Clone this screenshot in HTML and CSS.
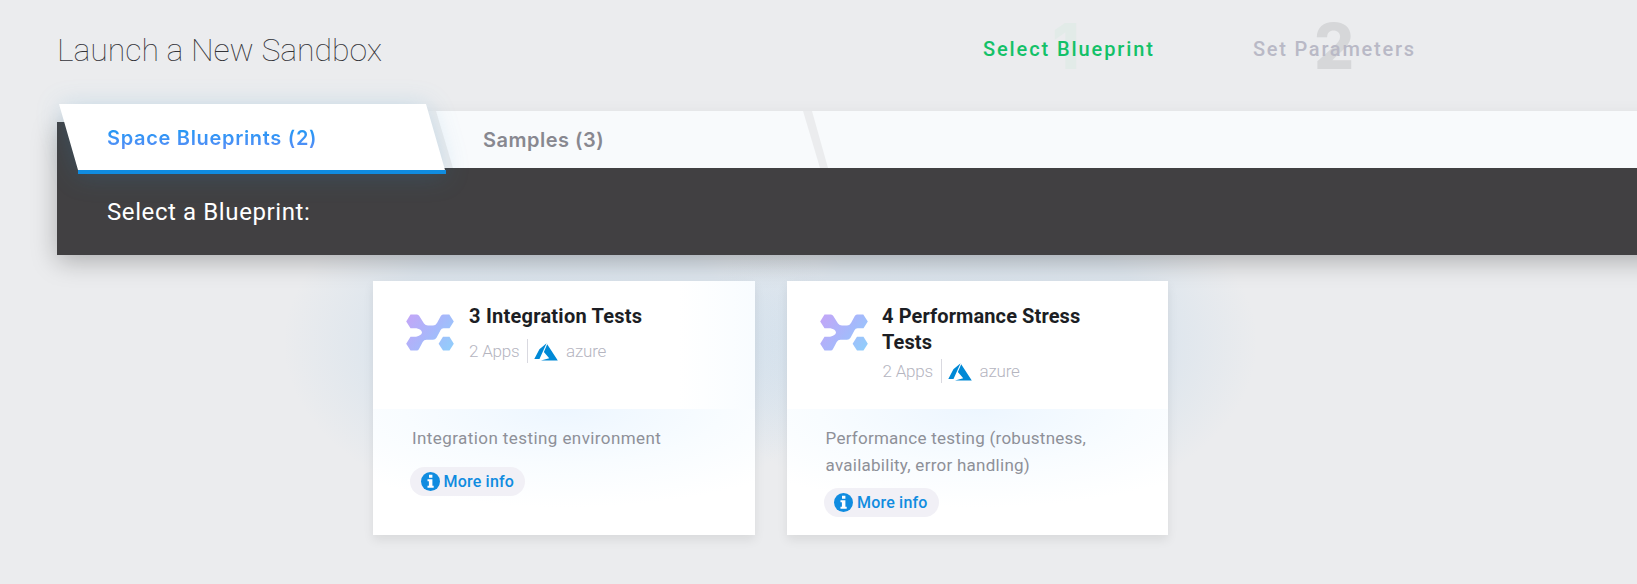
FILE: index.html
```
<!DOCTYPE html>
<html lang="en">
<head>
<meta charset="utf-8">
<title>Launch a New Sandbox</title>
<link rel="stylesheet" href="styles.css">
</head>
<body>
<svg class="defs" width="0" height="0" aria-hidden="true">
  <defs>
    <linearGradient id="brand" x1="0" y1="0" x2="48" y2="37" gradientUnits="userSpaceOnUse">
      <stop offset="0" stop-color="#c5a5f7"/><stop offset=".55" stop-color="#a5b9fb"/><stop offset="1" stop-color="#8fd0fb"/>
    </linearGradient>
    <symbol id="logo" viewBox="0 0 48 37">
      <path fill="url(#brand)" d="M4.500.5H11Q12.500.5 13.300 2L18 9.500Q19.500 11.500 22 11.500H27Q29.500 11.500 31 9L34.800 2Q35.600.5 37 .5H43.300L47.800 7.500 43.500 14.300H37.500Q35.500 14.300 34.500 16.300L30.500 23.800Q29.300 25.800 27 25.800H20.500Q18 25.800 16.700 28L13 35Q12.200 36.500 10.800 36.500H4.500L.2 29.700 4.500 22.700H10Q15.500 21.500 16 18.500 15.500 15.300 10.500 14.300H4.500L.2 7.500Z"/>
      <path fill="url(#brand)" d="M37 22.700H43.500L47.800 29.700 43.500 36.500H37L32.600 29.700Z"/>
    </symbol>
    <symbol id="azure" viewBox="0 0 24 18">
      <path fill="#0089d6" d="M12.600.3 5.400 6.300.3 16H5.500ZM13.200 1.200 9.900 9.100 15.200 15.300 7 17.500H23.800Z"/>
    </symbol>
    <symbol id="info" viewBox="0 0 19 19">
      <circle cx="9.500" cy="9.500" r="9.500" fill="#108ce0"/>
      <path fill="#fff" d="M8 2.800h3.400v2.900H8ZM6.500 7.200h4.900v6.600h1.300v2H6.500v-2h1.400V9.200H6.500Z"/>
    </symbol>
  </defs>
</svg>
<header class="header">
  <h1 class="title">Launch a New Sandbox</h1>
  <ol class="steps">
    <li class="step step-active"><span class="step-number">1</span><span class="step-label">Select Blueprint</span></li>
    <li class="step"><span class="step-number">2</span><span class="step-label">Set Parameters</span></li>
  </ol>
</header>
<section class="panel">
  <nav class="tabs">
    <a class="tab-active"><span class="tab-face"><span class="tab-text">Space Blueprints (2)</span></span></a>
    <div class="strip">
      <a class="tab">Samples (3)</a>
      <div class="strip-rest"></div>
    </div>
  </nav>
  <h2 class="prompt">Select a Blueprint:</h2>
</section>
<main class="cards">
  <article class="card">
    <div class="card-head card-head-tinted">
      <svg class="logo"><use href="#logo"/></svg>
      <div class="card-info">
        <h3 class="card-title">3 Integration Tests</h3>
        <div class="meta"><span class="apps">2 Apps</span><svg class="azure"><use href="#azure"/></svg><span class="cloud">azure</span></div>
      </div>
    </div>
    <div class="card-body">
      <p class="desc">Integration testing environment</p>
      <a class="more"><svg class="info"><use href="#info"/></svg><span>More info</span></a>
    </div>
  </article>
  <article class="card">
    <div class="card-head">
      <svg class="logo"><use href="#logo"/></svg>
      <div class="card-info">
        <h3 class="card-title card-title-long">4 Performance Stress<br>Tests</h3>
        <div class="meta meta-tight"><span class="apps">2 Apps</span><svg class="azure"><use href="#azure"/></svg><span class="cloud">azure</span></div>
      </div>
    </div>
    <div class="card-body">
      <p class="desc desc-long">Performance testing (robustness,<br>availability, error handling)</p>
      <a class="more"><svg class="info"><use href="#info"/></svg><span>More info</span></a>
    </div>
  </article>
</main>
</body>
</html>
```
FILE: styles.css
```
* { box-sizing: border-box; margin: 0; padding: 0; }
body { width: 1637px; height: 584px; overflow: hidden; background: #ebecee; font-family: Roboto, sans-serif; white-space: nowrap; }
.defs { position: absolute; }
.header { display: flex; height: 122px; padding-left: 57px; }
.title { width: 926px; padding-top: 31px; font-size: 32px; line-height: 38px; font-weight: 100; color: #333338; letter-spacing: -0.05px; }
.steps { display: flex; list-style: none; gap: 98px; }
.step { position: relative; width: 172px; padding-top: 37px; color: #b9b9c6; }
.step-label { position: relative; font-size: 20px; line-height: 24px; font-weight: 500; letter-spacing: 1.75px; }
.step-active { color: #13c168; }
.step-active .step-label { letter-spacing: 1.9px; }
.step-number { position: absolute; top: 10px; left: 0; width: 162px; text-align: center; font: 800 63px/72px Inter, sans-serif; color: #d6d7d9; }
.step-active .step-number { width: 166px; color: #e2ebe8; }
.panel { display: flow-root; position: relative; height: 133px; margin: 0 -40px 0 57px; background: #414042; box-shadow: 0 6px 24px rgba(0,0,0,.27); }
.tabs { display: flex; height: 71px; margin-top: -18px; padding-left: 2px; }
.tab-active { position: relative; z-index: 1; width: 388px; filter: drop-shadow(0 2px 13px rgba(40,140,200,.2)); }
.tab-face { display: block; height: 70px; padding: 20px 0 0 48px; background: linear-gradient(#fff 66px, #108ce0 66px); clip-path: polygon(0 0, 367px 0, 386px 66px, 387px 66px, 387px 70px, 19px 70px, 19px 66px); }
.tab-text { font: 600 20px/28px Inter, sans-serif; letter-spacing: .68px; color: transparent; background: linear-gradient(#189bf5, #5d8cf6); -webkit-background-clip: text; background-clip: text; }
.strip { display: flex; flex: 1; height: 57px; margin: 7px 0 0 -24px; padding-left: 13px; background: #ebecee; }
.tab { width: 385px; padding: 15px 0 0 47px; background: #f8fafc; clip-path: polygon(0 0, 367px 0, 384px 57px, 17px 57px); font: 600 20px/28px Inter, sans-serif; letter-spacing: .5px; color: #888890; }
.strip-rest { flex: 1; margin-left: -9px; background: #f8fafc; clip-path: polygon(0 0, 100% 0, 100% 100%, 16px 100%); }
.prompt { padding: 22px 0 0 50px; font-size: 24px; line-height: 30px; font-weight: 400; color: #fff; letter-spacing: .6px; }
.cards { display: flex; gap: 32px; padding: 26px 0 0 373px; }
.card { position: relative; width: 381.5px; height: 254px; background: #fff; box-shadow: 0 5px 10px rgba(0,0,0,.08); }
.card::before { content: ""; position: absolute; z-index: -1; inset: -115px -90px 15px; background: radial-gradient(closest-side, rgba(120,180,230,.15), rgba(120,180,230,.12) 65%, rgba(120,180,230,.05) 85%, transparent); }
.card-head { display: flex; height: 128px; padding: 22px 33px; }
.card-head-tinted { background: linear-gradient(90deg, transparent 80%, #f8fcff); }
.logo { width: 48px; height: 37px; margin: 11px 15px 0 0; }
.card-title { font-size: 20px; line-height: 26px; font-weight: 700; color: #1c1e24; letter-spacing: .24px; }
.card-title-long { letter-spacing: .1px; margin-left: -.5px; }
.meta { display: flex; align-items: center; height: 24px; margin-top: 10px; color: #b5b5bf; font-size: 17px; font-weight: 300; letter-spacing: -.2px; }
.meta-tight { margin-top: 4px; }
.apps { width: 59px; height: 24px; line-height: 25px; border-right: 1px solid #d9d9e0; }
.azure { width: 24px; height: 18px; margin: 1px 8px 0 6px; }
.card-body { height: 126px; padding: 16px 0 0 37px; background: radial-gradient(ellipse 76% 78% at 50% 0, #edf6ff, #f8fcff 55%, #fff); }
.desc { padding-left: 2px; font-size: 17px; line-height: 27px; font-weight: 400; color: #8e9098; letter-spacing: .42px; margin-bottom: 15px; }
.desc-long { letter-spacing: .26px; margin-bottom: 9px; }
.more { display: flex; align-items: center; width: 115px; height: 29px; padding-left: 10.5px; border-radius: 15px; background: #f1f0f6; color: #108ce0; font-size: 16px; font-weight: 500; letter-spacing: .2px; }
.info { width: 19px; height: 19px; margin-right: 4px; }
```
